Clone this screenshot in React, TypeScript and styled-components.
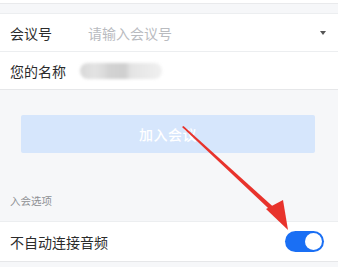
import React from "react";
import styled, { createGlobalStyle } from "styled-components";

const Global = createGlobalStyle`
  html, body { margin: 0; padding: 0; background: #f6f7f9; }
  body { font-family: "Noto Sans CJK SC", "Noto Sans", sans-serif; }
  * { box-sizing: border-box; }
`;

const Page = styled.div`
  position: relative;
  width: 338px;
  height: 267px;
  overflow: hidden;
  background: #f6f7f9;
`;

const TopStrip = styled.div`
  height: 4px;
  background: #fff;
  border-bottom: 1px solid #e9eaec;
`;

const Section = styled.div<{ $top: number }>`
  margin-top: ${(p) => p.$top}px;
  background: #fff;
  border-top: 1px solid #eceef0;
  border-bottom: 1px solid #e6e7e9;
`;

const Row = styled.div<{ $h: number; $divider?: boolean }>`
  height: ${(p) => p.$h}px;
  display: flex;
  align-items: center;
  padding: 0 10px;
  border-bottom: ${(p) => (p.$divider ? "1px solid #eceef0" : "none")};
`;

const Label = styled.span<{ $w?: number }>`
  font-size: 14px;
  color: #2b2b2b;
  width: ${(p) => (p.$w ? `${p.$w}px` : "auto")};
  flex-shrink: 0;
`;

const Placeholder = styled.span`
  font-size: 14px;
  color: #b9bbbf;
  flex: 1;
`;

const Caret = styled.span`
  width: 0;
  height: 0;
  border-left: 3.5px solid transparent;
  border-right: 3.5px solid transparent;
  border-top: 4px solid #555;
  margin-right: 2px;
`;

const Blur = styled.div`
  width: 82px;
  height: 16px;
  border-radius: 8px;
  background: linear-gradient(
    90deg,
    #d8d8d8 0%,
    #e3e3e3 18%,
    #dadada 30%,
    #d3d3d3 35%,
    #cfcfcf 55%,
    #e4e4e4 62%,
    #f0f0f0 100%
  );
  filter: blur(1.5px);
`;

const ButtonWrap = styled.div`
  padding: 25px 23px 0 21px;
`;

const JoinButton = styled.div`
  height: 38px;
  background: #d6e6fc;
  border-radius: 2px;
  display: flex;
  align-items: center;
  justify-content: center;
  color: #fff;
  font-size: 14px;
  font-weight: 500;
  letter-spacing: 0.5px;
`;

const SectionTitle = styled.div`
  padding: 41px 10px 0;
  font-size: 10.5px;
  line-height: 14px;
  color: #8e9094;
`;

const Toggle = styled.div<{ $on: boolean }>`
  margin-left: auto;
  margin-right: 4px;
  width: 39px;
  height: 21px;
  border-radius: 11px;
  background: ${(p) => (p.$on ? "#1a6ff4" : "#ddd")};
  display: flex;
  align-items: center;
  justify-content: ${(p) => (p.$on ? "flex-end" : "flex-start")};
  padding: 2px;
`;

const Knob = styled.div`
  width: 17px;
  height: 17px;
  border-radius: 50%;
  background: #fff;
`;

const ArrowSvg = styled.svg`
  position: absolute;
  left: 0;
  top: 0;
  pointer-events: none;
`;

export default function App() {
  return (
    <Page>
      <Global />
      <TopStrip />
      <Section $top={9}>
        <Row $h={38} $divider>
          <Label $w={78}>会议号</Label>
          <Placeholder>请输入会议号</Placeholder>
          <Caret />
        </Row>
        <Row $h={37}>
          <Label $w={70}>您的名称</Label>
          <Blur />
        </Row>
      </Section>
      <ButtonWrap>
        <JoinButton>加入会议</JoinButton>
      </ButtonWrap>
      <SectionTitle>入会选项</SectionTitle>
      <Section $top={13}>
        <Row $h={39}>
          <Label>不自动连接音频</Label>
          <Toggle $on>
            <Knob />
          </Toggle>
        </Row>
      </Section>
      <ArrowSvg width="338" height="267" viewBox="0 0 338 267">
        <polygon points="182,127 183.5,126 279,212 276,215.5" fill="#e8332c" />
        <polygon points="266,209 288,230 283,200" fill="#e8332c" />
      </ArrowSvg>
    </Page>
  );
}
